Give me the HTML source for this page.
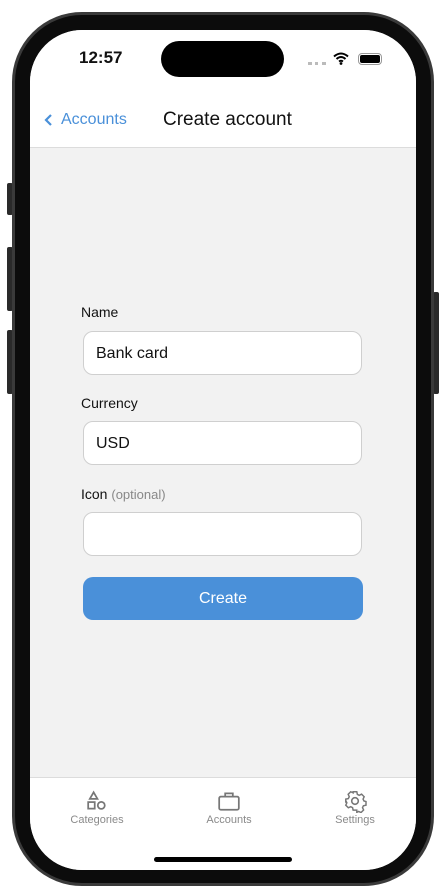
<!DOCTYPE html>
<html><head><style>
*{margin:0;padding:0;box-sizing:border-box}
body{width:446px;height:890px;background:#fff;position:relative;font-family:"Liberation Sans",sans-serif;overflow:hidden}
.btn{position:absolute;background:#2a2a2a;border-radius:2px}
.frame{position:absolute;left:12px;top:12px;width:422px;height:874px;border-radius:70px;background:#0c0c0c;border:3px solid #3a3a3a}
.screen{position:absolute;left:30px;top:30px;width:386px;height:840px;border-radius:52px;background:#f2f2f2;overflow:hidden}
.nav{position:absolute;left:0;top:0;width:386px;height:118px;background:#fff;border-bottom:1px solid #dcdcdc}
.tab{position:absolute;left:0;top:747px;width:386px;height:93px;background:#fff;border-top:1px solid #dcdcdc}
.lbl{position:absolute;left:51px;font-size:14px;color:#111}
.inp{position:absolute;left:53px;width:279px;height:44px;background:#fff;border:1px solid #cfcfcf;border-radius:10px;font-size:16px;padding-left:12px;line-height:43px;color:#111}
.tl{position:absolute;font-size:11px;color:#8a8a8a;top:36px;text-align:center;width:80px}
</style></head><body>
<div class="btn" style="left:7px;top:183px;width:6px;height:32px"></div>
<div class="btn" style="left:7px;top:247px;width:6px;height:64px"></div>
<div class="btn" style="left:7px;top:330px;width:6px;height:64px"></div>
<div class="btn" style="left:433px;top:292px;width:6px;height:102px"></div>
<div class="frame"></div>
<div class="screen">
 <div class="nav">
  <div style="position:absolute;left:49px;top:18px;font-size:17px;font-weight:bold;color:#111">12:57</div>
  <div style="position:absolute;left:131px;top:11px;width:123px;height:36px;border-radius:18px;background:#000"></div>
  <div style="position:absolute;left:278px;top:32px;width:18px;height:3px;border-top:3px dotted #bbb"></div>
  <svg style="position:absolute;left:303px;top:22px" width="16" height="13" viewBox="0 0 16 13"><path d="M1 4.5Q8 -1.5 15 4.5M3.5 7Q8 3 12.5 7M6 9.5Q8 8 10 9.5" stroke="#000" stroke-width="2" fill="none"/><circle cx="8" cy="11.5" r="1.4"/></svg>
  <div style="position:absolute;left:328px;top:23px;width:24px;height:12px;border:1.5px solid #999;border-radius:4px;padding:1px"><div style="width:100%;height:100%;background:#000;border-radius:2px"></div></div>
  <svg style="position:absolute;left:14px;top:83px" width="10" height="14" viewBox="0 0 10 14"><path d="M7 2L2 7l5 5" stroke="#4a90d9" stroke-width="2.2" fill="none"/></svg>
  <div style="position:absolute;left:31px;top:81px;font-size:16px;color:#4a90d9">Accounts</div>
  <div style="position:absolute;left:133px;top:79px;font-size:19px;color:#111">Create account</div>
 </div>
 <div class="lbl" style="top:274px">Name</div>
 <div class="inp" style="top:301px">Bank card</div>
 <div class="lbl" style="top:365px">Currency</div>
 <div class="inp" style="top:391px">USD</div>
 <div class="lbl" style="top:456px">Icon <span style="font-size:13px;color:#888">(optional)</span></div>
 <div class="inp" style="top:482px"></div>
 <div style="position:absolute;left:53px;top:547px;width:280px;height:43px;background:#4a90d9;border-radius:10px;color:#fff;font-size:16px;text-align:center;line-height:43px">Create</div>
 <div class="tab">
  <svg style="position:absolute;left:56px;top:12px" width="24" height="22" viewBox="0 0 22 20" fill="none" stroke="#777" stroke-width="1.6"><path d="M7 2L10.5 8H3.5Z"/><rect x="2" y="11" width="6" height="6"/><circle cx="14" cy="14" r="3.2"/></svg>
  <div class="tl" style="left:27px">Categories</div>
  <svg style="position:absolute;left:187px;top:12px" width="24" height="22" viewBox="0 0 22 20" fill="none" stroke="#777" stroke-width="1.6"><rect x="2" y="6" width="18" height="12" rx="1.5"/><path d="M7.5 6V3h7v3"/></svg>
  <div class="tl" style="left:159px">Accounts</div>
  <svg style="position:absolute;left:313px;top:11px" width="24" height="24" viewBox="0 0 24 24" fill="none" stroke="#777" stroke-width="1.6"><circle cx="12" cy="12" r="3.3"/><path d="M10 2h4l.6 2.8 2 1 2.6-1.2 2.8 2.8-1.2 2.6 1 2 2.2.6v4l-2.8.6-1 2 1.2 2.6-2.8 2.8-2.6-1.2-2 1L14 22h-4l-.6-2.8-2-1-2.6 1.2L2 16.6l1.2-2.6-1-2L2 14v-4l2.8-.6 1-2L4.6 4.8 7.4 2l2.6 1.2z" transform="scale(.92) translate(1 1)"/></svg>
  <div class="tl" style="left:285px">Settings</div>
  <div style="position:absolute;left:124px;top:79px;width:138px;height:5px;border-radius:3px;background:#000"></div>
 </div>
</div>
</body></html>
